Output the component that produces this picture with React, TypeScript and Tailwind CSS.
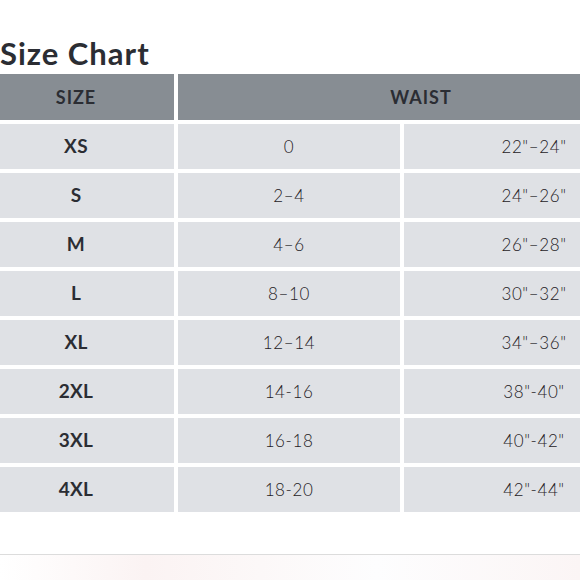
const rows = [
  { size: 'XS', num: '0', waist: '22"–24"' },
  { size: 'S', num: '2–4', waist: '24"–26"' },
  { size: 'M', num: '4–6', waist: '26"–28"' },
  { size: 'L', num: '8–10', waist: '30"–32"' },
  { size: 'XL', num: '12–14', waist: '34"–36"' },
  { size: '2XL', num: '14-16', waist: '38"-40"' },
  { size: '3XL', num: '16-18', waist: '40"-42"' },
  { size: '4XL', num: '18-20', waist: '42"-44"' },
];

const App = () => {
  return (
    <div className="h-[580px] w-[580px] overflow-hidden bg-white font-['Lato',sans-serif] text-[#2b2d33]">
      {/* Title */}
      <div className="h-[74px] pt-[35px] text-[31px] font-bold leading-[36px] tracking-[1px]">
        Size Chart
      </div>

      {/* Table */}
      <div className="ml-[-22px] grid w-[686px] grid-cols-[196px_222px_260px] gap-1">
        <div className="flex h-[46px] items-center justify-center bg-[#878d93] text-[18px] font-bold tracking-[1px]">
          SIZE
        </div>
        <div className="col-span-2 flex h-[46px] items-center justify-center bg-[#878d93] text-[18px] font-bold tracking-[1px]">
          WAIST
        </div>
        {rows.map((r) => (
          <div key={r.size} className="contents">
            <div className="flex h-[45px] items-center justify-center bg-[#dfe1e5] text-[19px] font-bold tracking-[0.3px]">
              {r.size}
            </div>
            <div className="flex h-[45px] items-center justify-center bg-[#dfe1e5] text-[17px] font-light tracking-[0.6px] text-[#1f2126]">
              {r.num}
            </div>
            <div className="flex h-[45px] items-center justify-center bg-[#dfe1e5] text-[17px] font-light tracking-[0.6px] text-[#1f2126]">
              {r.waist}
            </div>
          </div>
        ))}
      </div>

      {/* Footer strip */}
      <div className="mt-[42px] h-[26px] border-t border-[#dcdcdc] bg-[linear-gradient(90deg,#ffffff_0%,#fbf3f3_25%,#fcf8f8_45%,#fdfdfe_65%,#fbf5f5_100%)]" />
    </div>
  );
};

export default App;
